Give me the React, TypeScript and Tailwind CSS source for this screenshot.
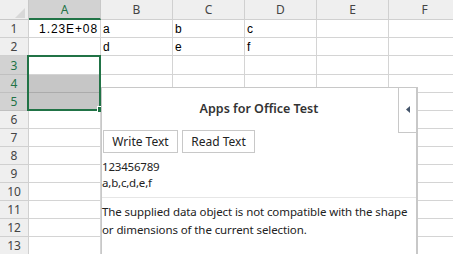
import React from "react";

const colLetters = ["A", "B", "C", "D", "E", "F"];
const rowHeights = [18, 18, 19, 18, 18, 18, 18, 18, 18, 18, 18, 18, 18];
const cellData: Record<string, string> = {
  "1-1": "a",
  "1-2": "b",
  "1-3": "c",
  "2-1": "d",
  "2-2": "e",
  "2-3": "f",
};

export default function App() {
  return (
    <div className="relative w-[453px] h-[254px] overflow-hidden bg-white" style={{ fontFamily: '"Liberation Sans", Arial, sans-serif' }}>
      {/* header row */}
      <div className="flex h-[20px]">
        <div className="relative w-[29px] h-full shrink-0 bg-[#efefef] border-r border-b border-[#c8c8c8]">
          <svg className="absolute left-[15px] top-[8px]" width="10" height="10" viewBox="0 0 10 10">
            <polygon points="10,0 10,10 0,10" fill="#d8d8d8" />
          </svg>
        </div>
        {colLetters.map((c, i) => (
          <div
            key={c}
            className={
              i === 0
                ? "w-[72px] shrink-0 h-full bg-[#d2d2d2] border-r border-[#c8c8c8] border-b-2 border-b-[#217346] flex items-center justify-center text-[12px] text-[#217346] font-['Noto_Sans',sans-serif] pt-[1px]"
                : "w-[72px] shrink-0 h-full bg-[#efefef] border-r border-b border-[#d0d0d0] flex items-center justify-center text-[12px] text-[#444444] font-['Noto_Sans',sans-serif] pt-[1px]"
            }
          >
            {c}
          </div>
        ))}
      </div>
      {rowHeights.map((h, ri) => {
        const r = ri + 1;
        const sel = r >= 3 && r <= 5;
        return (
          <div key={r} className="flex" style={{ height: h }}>
            <div
              className={
                sel
                  ? "w-[29px] shrink-0 h-full bg-[#d2d2d2] border-r border-b border-[#c0c0c0] flex items-end justify-center pb-[1px] text-[12px] leading-[14px] text-[#217346] font-['Noto_Sans',sans-serif]"
                  : "w-[29px] shrink-0 h-full bg-[#efefef] border-r border-b border-[#d0d0d0] flex items-end justify-center pb-[1px] text-[12px] leading-[14px] text-[#444444] font-['Noto_Sans',sans-serif]"
              }
            >
              {r}
            </div>
            {colLetters.map((c, ci) => {
              const gray = ci === 0 && (r === 4 || r === 5);
              let content: string | undefined = cellData[`${r}-${ci}`];
              const isNum = ci === 0 && r === 1;
              if (isNum) content = "1.23E+08";
              return (
                <div
                  key={c}
                  className={
                    (gray ? "bg-[#c6c6c6] border-[#ababab] " : "bg-white border-[#d4d4d4] ") +
                    "w-[72px] shrink-0 h-full border-r border-b flex items-end text-[12px] leading-[14px] text-black pb-[1px] " +
                    (isNum ? "justify-end pr-[2px] tracking-[0.9px]" : "pl-[2px]")
                  }
                >
                  {content}
                </div>
              );
            })}
          </div>
        );
      })}

      {/* selection box */}
      <div className="absolute left-[27px] top-[55px] w-[74px] h-[56px] border-2 border-[#217346]" />
      <div className="absolute left-[97px] top-[106px] w-[6px] h-[6px] bg-[#217346] border border-white border-r-0 border-b-0" />

      {/* content add-in panel */}
      <div
        className="absolute left-[101px] top-[87px] w-[317px] h-[170px] bg-white border-l border-t border-r-2 border-[#c8c8c8] text-[#222222]"
        style={{ fontFamily: '"Noto Sans", "Open Sans", sans-serif' }}
      >
        <div className="h-[42px] flex items-center justify-center text-[12.5px] font-semibold text-[#333333]">
          Apps for Office Test
        </div>
        <div className="absolute right-0 top-0 w-[18px] h-[45px] border-l border-b border-[#c8c8c8] flex items-center justify-center">
          <svg width="5" height="7" viewBox="0 0 5 7" className="ml-[1px] mt-[-2px]">
            <polygon points="4,0 4,7 0,3.5" fill="#44546a" />
          </svg>
        </div>
        <div className="flex gap-[4px] ml-[1px] h-[23px]">
          <button className="w-[75px] h-[23px] border border-[#c8c8c8] bg-white text-[12px] text-[#222222] flex items-center justify-center">
            Write Text
          </button>
          <button className="w-[73px] h-[23px] border border-[#c8c8c8] bg-white text-[12px] text-[#222222] flex items-center justify-center">
            Read Text
          </button>
        </div>
        <div className="mt-[6px] text-[11.5px] leading-[16px] tracking-[-0.2px]">
          <div>123456789</div>
          <div>a,b,c,d,e,f</div>
        </div>
        <div className="mt-[6px] border-t border-[#e6e6e6]" />
        <div className="pt-[5px] text-[11.5px] leading-[18px] tracking-[-0.1px] w-[312px]">
          The supplied data object is not compatible with the shape or dimensions of the current selection.
        </div>
      </div>
    </div>
  );
}
